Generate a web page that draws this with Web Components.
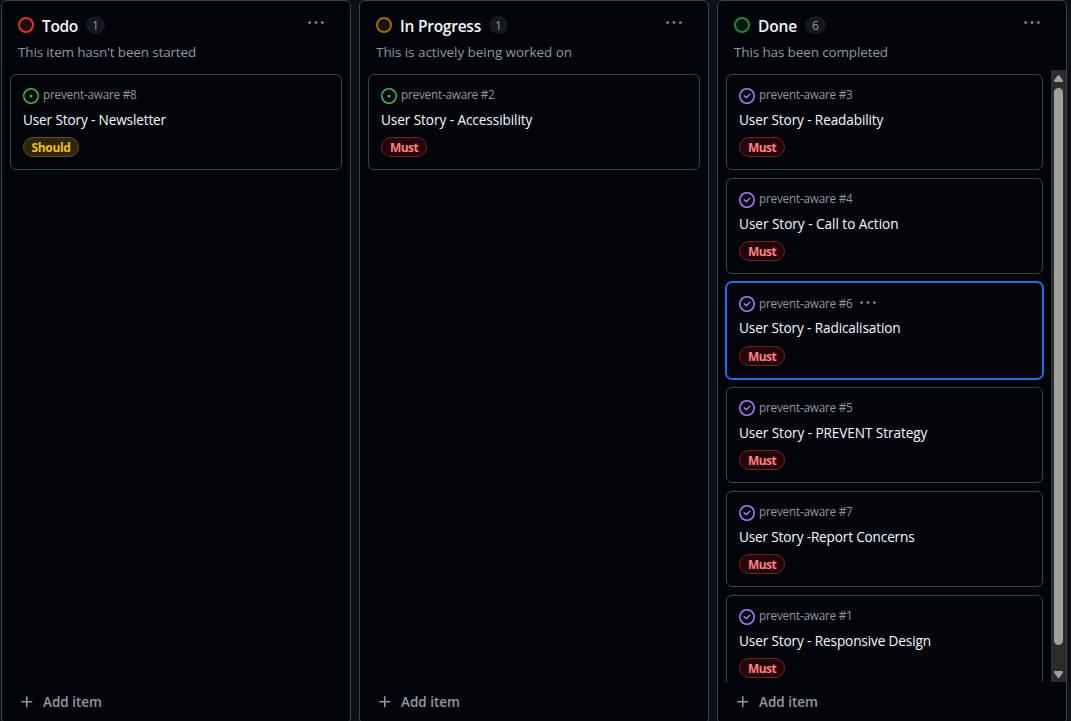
<!DOCTYPE html>
<html lang="en">
<head>
<meta charset="utf-8">
<title>Project board</title>
<style>
html,body{margin:0;height:100%;overflow:hidden;background:#0d1117}
body{font-family:"Open Sans","Noto Sans",sans-serif;color:#f0f6fc}
</style>
</head>
<body>
<project-board>
  <board-column name="Todo" name-width="36" count="1" tone="red" note="This item hasn't been started" note-width="178">
    <story-card number="8" state="open" label="Should" text-width="143">User Story - Newsletter</story-card>
  </board-column>
  <board-column name="In Progress" name-width="81" count="1" tone="amber" note="This is actively being worked on" note-width="196">
    <story-card number="2" state="open" label="Must" text-width="151.3">User Story - Accessibility</story-card>
  </board-column>
  <board-column name="Done" name-width="39" count="6" tone="green" note="This has been completed" note-width="154" scrolling>
    <story-card number="3" state="closed" label="Must" text-width="144.3">User Story - Readability</story-card>
    <story-card number="4" state="closed" label="Must" text-width="159.5">User Story - Call to Action</story-card>
    <story-card number="6" state="closed" label="Must" text-width="161.5" selected>User Story - Radicalisation</story-card>
    <story-card number="5" state="closed" label="Must" text-width="188.3" class="raised">User Story - PREVENT Strategy</story-card>
    <story-card number="7" state="closed" label="Must" text-width="175.5">User Story -Report Concerns</story-card>
    <story-card number="1" state="closed" label="Must" text-width="192">User Story - Responsive Design</story-card>
  </board-column>
</project-board>
<script>
const KEBAB = '<svg class="kebab" width="16" height="16" viewBox="0 0 16 16" fill="#9198a1"><circle cx="1.6" cy="7.5" r="1.35"/><circle cx="8" cy="7.5" r="1.35"/><circle cx="14.4" cy="7.5" r="1.35"/></svg>';

// One line of text whose tracking is adjusted to a given width.
class FitText extends HTMLElement {
  constructor() {
    super();
    this.attachShadow({mode: 'open'}).innerHTML =
      '<style>:host{display:inline-block;white-space:pre;flex:none}span{display:inline-block}</style><span><slot></slot></span>';
  }
  connectedCallback() {
    const span = this.shadowRoot.querySelector('span');
    const target = Number(this.getAttribute('width'));
    const count = this.textContent.length;
    if (!target || !count) return;
    const natural = span.getBoundingClientRect().width;
    span.style.letterSpacing = ((target - natural) / count) + 'px';
    this.style.width = target + 'px';
  }
}

class ProjectBoard extends HTMLElement {
  constructor() {
    super();
    this.attachShadow({mode: 'open'}).innerHTML =
      '<style>:host{display:grid;grid-template-columns:repeat(3,350px);gap:8px;padding-left:1px;height:724px}</style><slot></slot>';
  }
}

class BoardColumn extends HTMLElement {
  connectedCallback() {
    if (this.shadowRoot) return;
    const tones = {red: ['#da3633', '#1b0b0f'], amber: ['#9e6a03', '#1c1508'], green: ['#238636', '#06180f']};
    const [line, fill] = tones[this.getAttribute('tone')];
    const at = n => this.getAttribute(n);
    const bar = this.hasAttribute('scrolling') ? `<div class="bar">
      <svg width="15" height="17" viewBox="0 0 15 17" fill="#9f9f9f"><path d="M6.6 5.6Q7.5 4.5 8.4 5.6L11.8 10.2Q12.4 12 11 12H4Q2.6 12 3.2 10.2Z"/></svg>
      <div class="thumb"></div>
      <svg class="down" width="15" height="17" viewBox="0 0 15 17" fill="#9f9f9f"><path d="M6.6 12.4Q7.5 13.5 8.4 12.4L11.8 7.8Q12.4 6 11 6H4Q2.6 6 3.2 7.8Z"/></svg></div>` : '';
    this.attachShadow({mode: 'open'}).innerHTML = `<style>
      :host{display:flex;flex-direction:column;box-sizing:border-box;height:724px;background:#010409;border:1px solid #3d444d;border-radius:6px;overflow:hidden}
      header{height:69px;flex:none;box-sizing:border-box;padding:14px 26px 0 16px}
      .top{display:flex;height:20px;align-items:center}
      .ring{flex:none;margin-right:8px}
      .name{font-size:15.5px;font-weight:600;line-height:20px;padding-top:1px;color:#f7fbff}
      .count{margin-left:8px;height:18px;min-width:19px;box-sizing:border-box;border-radius:9px;background:#15191f;color:#9198a1;font-size:12px;line-height:19px;text-align:center}
      .count.wide{min-width:21px}
      .kebab{margin-left:auto;align-self:flex-start}
      .note{display:block;margin-top:7px;font-size:13.5px;line-height:20px;color:#9198a1}
      .body{display:flex;flex:none;height:612px;overflow:hidden}
      .cards{flex:1;min-width:0;padding:4px 8px;display:flex;flex-direction:column;gap:8px}
      .bar{flex:none;width:15px;background:#2c2c2c;display:flex;flex-direction:column}
      .bar svg{display:block;flex:none}
      .thumb{width:9px;height:557px;margin:1px 0 0 3px;border-radius:4.5px;background:#9f9f9f}
      .down{margin-top:auto}
      footer{display:flex;align-items:center;height:40px;padding-left:17px;font-size:13.5px;font-weight:600;color:#9198a1}
      footer svg{margin-right:8px;flex:none}
      </style>
      <header><div class="top">
        <svg class="ring" width="16" height="16" viewBox="0 0 16 16"><circle cx="8" cy="8" r="7" fill="${fill}" stroke="${line}" stroke-width="2"/></svg>
        <fit-text class="name" width="${at('name-width')}">${at('name')}</fit-text>
        <span class="count${this.hasAttribute('scrolling') ? ' wide' : ''}">${at('count')}</span>${KEBAB}
      </div><fit-text class="note" width="${at('note-width')}">${at('note')}</fit-text></header>
      <div class="body"><div class="cards"><slot></slot></div>${bar}</div>
      <footer><svg width="16" height="16" viewBox="0 0 16 16" fill="#9198a1"><path d="M7.75 2a.75.75 0 0 1 .75.75V7h4.25a.75.75 0 0 1 0 1.5H8.5v4.25a.75.75 0 0 1-1.5 0V8.5H2.75a.75.75 0 0 1 0-1.5H7V2.75A.75.75 0 0 1 7.75 2Z"/></svg><fit-text width="59">Add item</fit-text></footer>`;
  }
}

class StoryCard extends HTMLElement {
  connectedCallback() {
    if (this.shadowRoot) return;
    const selected = this.hasAttribute('selected');
    const label = this.getAttribute('label');
    const icon = this.getAttribute('state') === 'open'
      ? '<circle cx="8" cy="8" r="7.25" fill="none" stroke="#3fb950" stroke-width="1.5"/><circle cx="8" cy="8" r="1.5" fill="#3fb950"/>'
      : '<path fill="#ab7df8" d="M11.28 6.78a.75.75 0 0 0-1.06-1.06L7.25 8.69 5.78 7.22a.75.75 0 0 0-1.06 1.06l2 2a.75.75 0 0 0 1.06 0l3.5-3.5ZM16 8A8 8 0 1 1 0 8a8 8 0 0 1 16 0Zm-1.5 0a6.5 6.5 0 1 0-13 0 6.5 6.5 0 0 0 13 0Z"/>';
    this.attachShadow({mode: 'open'}).innerHTML = `<style>
      :host{display:block;flex:none;box-sizing:border-box;height:96px;border:1px solid #3d444d;border-radius:6px;padding:11px 12px 0;background:#010409}
      :host([selected]){height:97px;border-color:#1f6feb;box-shadow:0 0 0 1px #1f6feb}
      .ref{display:flex;height:20px;align-items:flex-start}
      .icon{flex:none;margin:2px 4px 0 0}
      :host(.raised) .icon{margin-top:1px}
      .num{font-size:11.75px;line-height:18px;margin-top:-1px;color:#9198a1}
      :host([selected]) .num{margin-top:0}
      .kebab{margin:1px 0 0 7px}
      .title{display:block;margin-top:4px;font-size:13.6px;line-height:20px;color:#f7fbff}
      .label{display:flex;justify-content:center;align-items:center;box-sizing:border-box;height:20px;margin-top:7px;border-radius:10px;font-size:12px;font-weight:700;line-height:18px}
      .label fit-text{padding-top:2px}
      :host([selected]) .label{margin-top:8px}
      .Must{width:46px;background:#25030a;border:1px solid #6b272d;color:#ff8182}
      .Should{width:56px;background:#2e260a;border:1px solid #6b5208;color:#f5c000}
      </style>
      <div class="ref"><svg class="icon" width="16" height="16" viewBox="0 0 16 16">${icon}</svg><fit-text class="num" width="93.6">prevent-aware #${this.getAttribute('number')}</fit-text>${selected ? KEBAB : ''}</div>
      <fit-text class="title" width="${this.getAttribute('text-width')}">${this.textContent}</fit-text>
      <div class="label ${label}"><fit-text width="${label === 'Must' ? 28 : 39}">${label}</fit-text></div>`;
  }
}
customElements.define('fit-text', FitText);
customElements.define('project-board', ProjectBoard);
customElements.define('story-card', StoryCard);
customElements.define('board-column', BoardColumn);
</script>
</body>
</html>
